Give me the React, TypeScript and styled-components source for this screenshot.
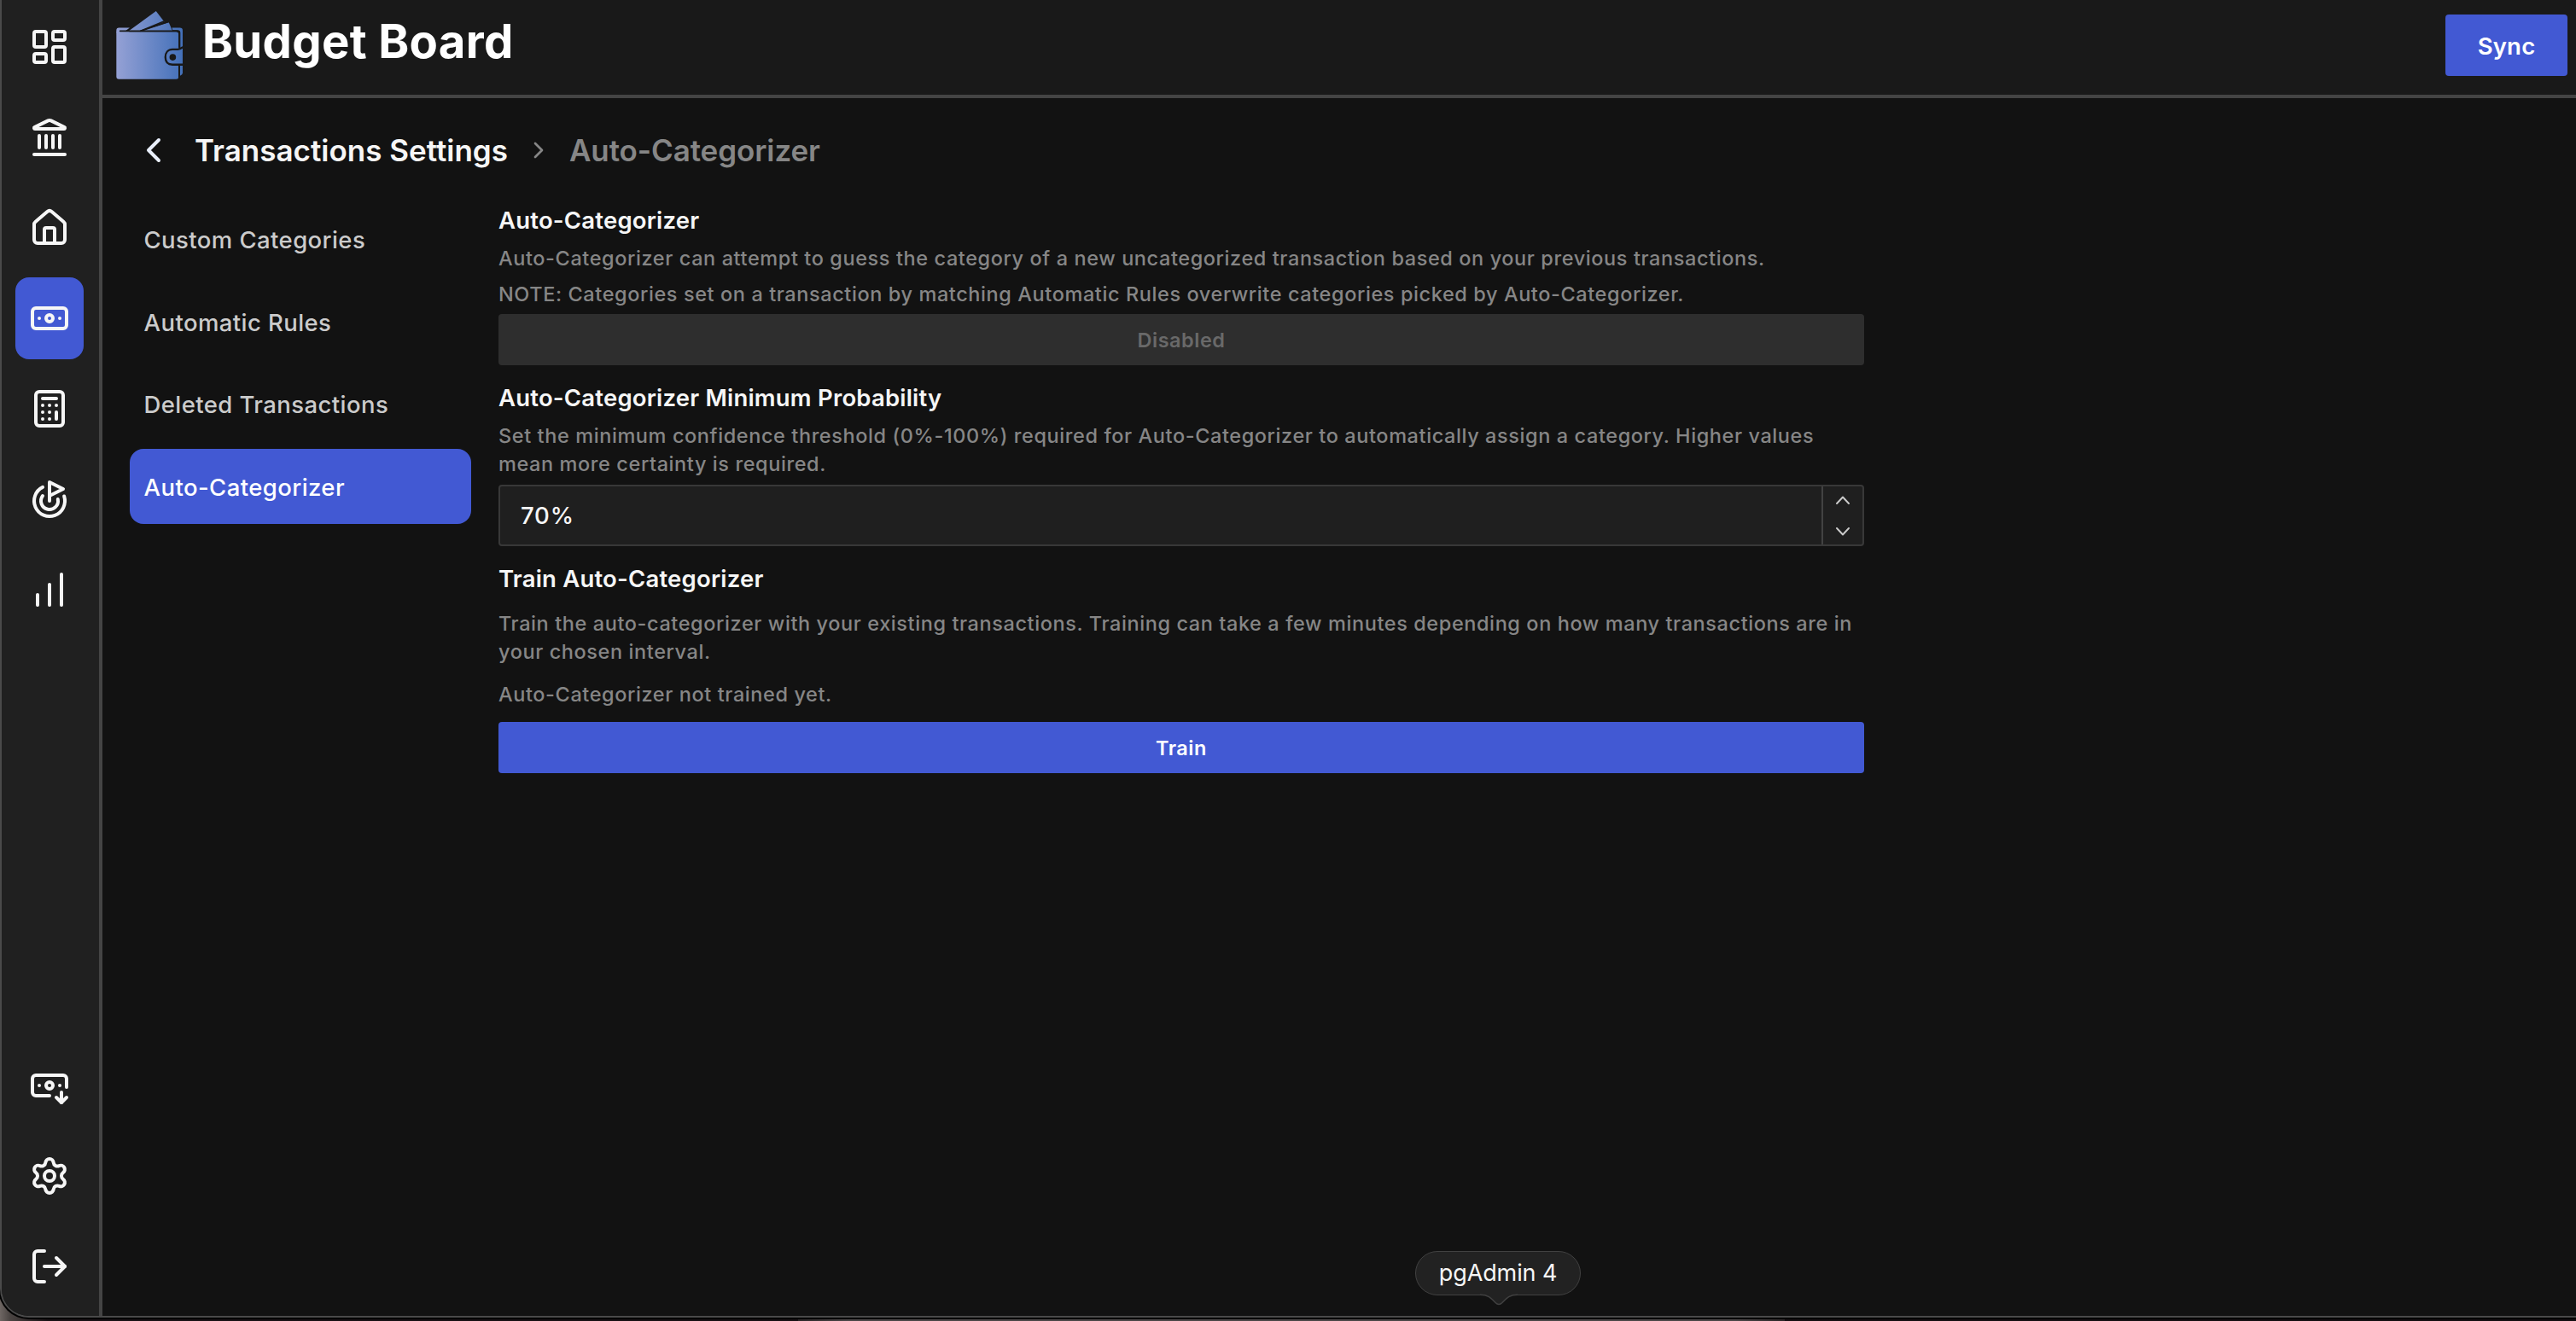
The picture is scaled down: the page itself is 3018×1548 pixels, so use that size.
import React from "react";
import styled, { createGlobalStyle } from "styled-components";
import {
  Banknote,
  BanknoteArrowDown,
  Calculator,
  ChartNoAxesColumnIncreasing,
  ChevronLeft,
  ChevronRight,
  Goal,
  House,
  Landmark,
  LayoutDashboard,
  LogOut,
  Settings,
  type LucideIcon,
} from "lucide-react";

const color = {
  accent: "#4259d3",
  body: "#121212",
  header: "#191919",
  sidebar: "#202020",
  line: "#444444",
  frame: "#4a4a4a",
  bright: "#f6f6f6",
  text: "#cbcbcb",
  dimmed: "#868686",
};

const GlobalStyle = createGlobalStyle`
  * { box-sizing: border-box; }
  body {
    margin: 0;
    background: #120d10;
    font-family: Inter, "Liberation Sans", sans-serif;
    font-weight: 500;
    color: ${color.bright};
  }
  h1, h2, p { margin: 0; }
  button { font-family: inherit; border: 0; padding: 0; }
`;

const Desktop = styled.div`
  position: relative;
  width: 3018px;
  height: 1548px;
  overflow: hidden;
  background: linear-gradient(90deg, #6e6663 0, #4a4442 12px, #171114 56px, #120d10 100%);
`;

const DockEdge = styled.div`
  width: 1156px;
  height: 2px;
  margin: 2px 0 0 935px;
  background: linear-gradient(90deg, #2a2627, #4b4748 5%, #4b4748 95%, #2a2627);
`;

const Window = styled.div`
  display: flex;
  height: 1544px;
  overflow: hidden;
  border-left: 2px solid ${color.frame};
  border-bottom: 2px solid ${color.frame};
  border-bottom-left-radius: 34px;
  background: ${color.body};
  box-shadow: 0 0 0 2px #000;
`;

const Sidebar = styled.nav`
  display: flex;
  flex-direction: column;
  justify-content: space-between;
  flex: 0 0 118px;
  padding: 7px 16px 10px;
  border-right: 4px solid ${color.line};
  background: ${color.sidebar};
`;

const SidebarGroup = styled.div`
  display: flex;
  flex-direction: column;
  gap: 10px;
`;

const SidebarButton = styled.button<{ $active?: boolean }>`
  display: grid;
  place-items: center;
  width: 80px;
  height: 96px;
  border-radius: 16px;
  color: ${color.bright};
  background: ${(p) => (p.$active ? color.accent : "transparent")};
`;

const Page = styled.div`
  display: flex;
  flex-direction: column;
  flex: 1;
`;

const Header = styled.header`
  display: flex;
  align-items: flex-start;
  height: 115px;
  padding: 0 10px 0 16px;
  border-bottom: 4px solid ${color.line};
  background: ${color.header};
`;

const LogoSlot = styled.div`
  width: 78px;
  height: 80px;
  margin: 13px 23px 0 0;
`;

const AppTitle = styled.h1`
  margin-top: 12px;
  font-size: 54.5px;
  font-weight: 700;
  line-height: 72px;
  letter-spacing: 0.3px;
  color: #fff;
`;

const SyncButton = styled.button`
  width: 143px;
  height: 72px;
  margin: 17px 0 0 auto;
  padding-top: 2px;
  border-radius: 4px;
  font-size: 27.5px;
  font-weight: 600;
  letter-spacing: 0.2px;
  color: #fff;
  background: ${color.accent};
`;

const Main = styled.main`
  display: flex;
  flex-direction: column;
  gap: 36px;
  padding: 37px 32px 0;
`;

const Breadcrumbs = styled.div`
  display: flex;
  align-items: center;
  height: 48px;
  padding-left: 4px;
`;

const BackButton = styled.button`
  display: flex;
  margin-right: 24px;
  color: #e9effc;
  background: none;
`;

const Crumb = styled.span<{ $current?: boolean }>`
  font-size: 35px;
  font-weight: 600;
  letter-spacing: ${(p) => (p.$current ? "-0.1px" : "0")};
  color: ${(p) => (p.$current ? color.dimmed : color.bright)};
`;

const CrumbDivider = styled.span`
  display: flex;
  margin: 0 20px;
  color: ${color.dimmed};
`;

const Columns = styled.div`
  display: flex;
  gap: 32px;
`;

const SectionNav = styled.div`
  display: flex;
  flex-direction: column;
  gap: 8px;
  width: 400px;
`;

const SectionLink = styled.button<{ $active?: boolean }>`
  height: 88.6px;
  padding: 2px 16px 0 16.5px;
  border-radius: 16px;
  text-align: left;
  font-size: 27.5px;
  font-weight: 500;
  letter-spacing: 0.42px;
  color: ${(p) => (p.$active ? "#ffffff" : color.text)};
  background: ${(p) => (p.$active ? color.accent : "transparent")};
`;

const SettingsList = styled.div`
  display: flex;
  flex-direction: column;
  gap: 16px;
  width: 1600px;
`;

const Setting = styled.section`
  display: flex;
  flex-direction: column;
`;

const SettingTitle = styled.h2`
  font-size: 27.5px;
  font-weight: 600;
  line-height: 44px;
  letter-spacing: 0.2px;
`;

const Description = styled.p<{ $before: number }>`
  margin-top: ${(p) => p.$before}px;
  font-size: 23.5px;
  line-height: 33px;
  letter-spacing: 0.59px;
  color: ${color.dimmed};
`;

const WideButton = styled.button<{ $before: number }>`
  height: 60px;
  margin-top: ${(p) => p.$before}px;
  border-radius: 4px;
  font-size: 23.5px;
  font-weight: 600;
  letter-spacing: 0.5px;
  color: #fff;
  background: ${color.accent};

  &:disabled {
    color: #696969;
    background: #2e2e2e;
  }
`;

const NumberField = styled.div`
  display: flex;
  height: 72px;
  margin-top: 8px;
  border: 2px solid #383838;
  border-radius: 4px;
  background: #1f1f1f;
`;

const NumberValue = styled.div`
  flex: 1;
  padding-left: 24px;
  font-size: 27.5px;
  line-height: 69px;
  letter-spacing: 0.8px;
`;

const Spinner = styled.div`
  display: flex;
  flex-direction: column;
  align-items: center;
  justify-content: center;
  gap: 27px;
  width: 48px;
  border-left: 2px solid #424242;
  color: ${color.text};
`;

const DockTooltip = styled.div`
  position: absolute;
  left: 1658px;
  top: 1466px;
  width: 194px;
  height: 52px;
  border: 1.5px solid #414141;
  border-radius: 26px;
  background: #222222;
  text-align: center;
  font-size: 27px;
  font-weight: 400;
  line-height: 50px;
  letter-spacing: -0.1px;
`;

const TooltipTip = styled.svg`
  position: absolute;
  left: 75px;
  top: 48px;
`;

function WalletLogo() {
  return (
    <svg width="78" height="80" viewBox="17 24 235 241">
      <defs>
        <linearGradient id="wallet" gradientUnits="userSpaceOnUse" x1="17" y1="0" x2="252" y2="0">
          <stop offset="0" stopColor="#95a1d5" />
          <stop offset="1" stopColor="#4370b9" />
        </linearGradient>
      </defs>
      <g fill="url(#wallet)">
        <path d="M62 94 158 24l29 38-83 32Z" />
        <path d="m105 94 98-30 13 30Z" />
        <path d="M27 83h38L49 95h14v5H18v-8q0-9 9-9Z" />
        <path d="M18 97h211q9 0 9 9v149q0 9-9 9H27q-9 0-9-9Z" />
        <path d="M214 83h28q10 0 10 10v55l-8 5V101q0-10-10-10h-17Z" />
        <path d="M243 213h9v29q0 7-9 10Z" />
      </g>
      <g fill="none" stroke={color.header} strokeWidth="5">
        <path d="M31 94.500h199q10 0 10 10V151" strokeLinecap="round" />
        <path d="m104 94 100-33" />
        <path d="m186 60-84 35" />
      </g>
      <path
        d="M252 151q-7 8-17 8h-19c-16 0-25 12-25 28s9 26 25 26h36"
        fill="url(#wallet)"
        stroke={color.header}
        strokeWidth="7"
      />
      <path d="M240 213v51" stroke={color.header} strokeWidth="6" />
      <circle cx="217" cy="187" r="11.500" fill={color.header} />
    </svg>
  );
}

function StepArrow({ up }: { up?: boolean }) {
  return (
    <svg width="18" height="10" viewBox="0 0 18 10" fill="none" stroke="currentColor" strokeWidth="1.900" strokeLinecap="round" strokeLinejoin="round">
      <path d={up ? "M2 9 9 1.500 16 9" : "m2 1 7 7.500L16 1"} />
    </svg>
  );
}

const topItems: { icon: LucideIcon; active?: boolean }[] = [
  { icon: LayoutDashboard },
  { icon: Landmark },
  { icon: House },
  { icon: Banknote, active: true },
  { icon: Calculator },
  { icon: Goal },
  { icon: ChartNoAxesColumnIncreasing },
];
const bottomItems: { icon: LucideIcon; active?: boolean }[] = [
  { icon: BanknoteArrowDown },
  { icon: Settings },
  { icon: LogOut },
];
const sections = ["Custom Categories", "Automatic Rules", "Deleted Transactions", "Auto-Categorizer"];

function SidebarItems({ items }: { items: typeof topItems }) {
  return (
    <SidebarGroup>
      {items.map(({ icon: Icon, active }, i) => (
        <SidebarButton key={i} $active={active}>
          <Icon size={48} strokeWidth={2} />
        </SidebarButton>
      ))}
    </SidebarGroup>
  );
}

export default function App() {
  return (
    <Desktop>
      <GlobalStyle />
      <Window>
        <Sidebar>
          <SidebarItems items={topItems} />
          <SidebarItems items={bottomItems} />
        </Sidebar>
        <Page>
          <Header>
            <LogoSlot>
              <WalletLogo />
            </LogoSlot>
            <AppTitle>Budget Board</AppTitle>
            <SyncButton>Sync</SyncButton>
          </Header>
          <Main>
            <Breadcrumbs>
              <BackButton>
                <ChevronLeft size={48} strokeWidth={2} />
              </BackButton>
              <Crumb>Transactions Settings</Crumb>
              <CrumbDivider>
                <ChevronRight size={32} strokeWidth={2} />
              </CrumbDivider>
              <Crumb $current>Auto-Categorizer</Crumb>
            </Breadcrumbs>
            <Columns>
              <SectionNav>
                {sections.map((name) => (
                  <SectionLink key={name} $active={name === "Auto-Categorizer"}>
                    {name}
                  </SectionLink>
                ))}
              </SectionNav>
              <SettingsList>
                <Setting>
                  <SettingTitle>Auto-Categorizer</SettingTitle>
                  <Description $before={6}>
                    Auto-Categorizer can attempt to guess the category of a new uncategorized transaction based on your
                    previous transactions.
                  </Description>
                  <Description $before={9}>
                    NOTE: Categories set on a transaction by matching Automatic Rules overwrite categories picked by
                    Auto-Categorizer.
                  </Description>
                  <WideButton disabled $before={7}>
                    Disabled
                  </WideButton>
                </Setting>
                <Setting>
                  <SettingTitle>Auto-Categorizer Minimum Probability</SettingTitle>
                  <Description $before={6}>
                    Set the minimum confidence threshold (0%-100%) required for Auto-Categorizer to automatically assign
                    a category. Higher values mean more certainty is required.
                  </Description>
                  <NumberField>
                    <NumberValue>70%</NumberValue>
                    <Spinner>
                      <StepArrow up />
                      <StepArrow />
                    </Spinner>
                  </NumberField>
                </Setting>
                <Setting>
                  <SettingTitle>Train Auto-Categorizer</SettingTitle>
                  <Description $before={14}>
                    Train the auto-categorizer with your existing transactions. Training can take a few minutes depending
                    on how many transactions are in your chosen interval.
                  </Description>
                  <Description $before={17}>Auto-Categorizer not trained yet.</Description>
                  <WideButton $before={16}>Train</WideButton>
                </Setting>
              </SettingsList>
            </Columns>
          </Main>
        </Page>
      </Window>
      <DockEdge />
      <DockTooltip>
        pgAdmin 4
        <TooltipTip width="44" height="16" viewBox="0 0 44 16">
          <path d="M0 0v2.200c10 0 13 4 18 9.300q4 4 8 0c5-5.300 8-9.300 18-9.300V0Z" fill="#222222" />
          <path d="M0 2.200c10 0 13 4 18 9.300q4 4 8 0c5-5.300 8-9.300 18-9.300" fill="none" stroke="#414141" strokeWidth="1.500" />
        </TooltipTip>
      </DockTooltip>
    </Desktop>
  );
}
